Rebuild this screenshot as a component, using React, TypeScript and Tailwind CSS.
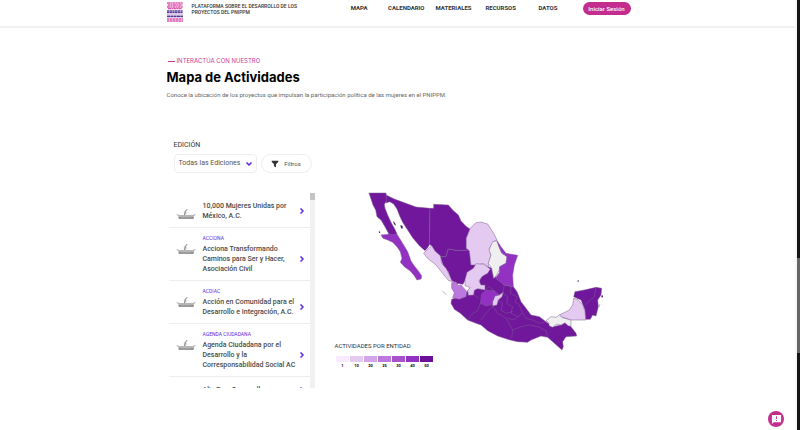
import { ChevronDown, ChevronRight } from "lucide-react";
import { useState } from "react";

const navItems = ["MAPA", "CALENDARIO", "MATERIALES", "RECURSOS", "DATOS"];

const projects = [
  { tag: "", name: "10,000 Mujeres Unidas por México, A.C." },
  { tag: "ACCIONA", name: "Acciona Transformando Caminos para Ser y Hacer, Asociación Civil" },
  { tag: "ACDIAC", name: "Acción en Comunidad para el Desarrollo e Integración, A.C." },
  { tag: "AGENDA CIUDADANA", name: "Agenda Ciudadana por el Desarrollo y la Corresponsabilidad Social AC" },
  { tag: "", name: "Alia Para Desarrollo" }
];

const legend = [
  { label: "1", color: "bg-[#f7ebfd]" },
  { label: "10", color: "bg-[#e4c9f1]" },
  { label: "20", color: "bg-[#d3a5ea]" },
  { label: "25", color: "bg-[#bd78dd]" },
  { label: "30", color: "bg-[#a851cd]" },
  { label: "40", color: "bg-[#9331c2]" },
  { label: "50", color: "bg-[#6b1199]" }
];

const states = [
  { name: "Baja California", fill: "#70179b", d: "M24 24H75L77 48L70 58L72 70L80 90L90 112L100 130L106 142L108 150L85 150L80 140L72 125L60 105L48 95L44 75L36 60L30 42Z" },
  { name: "Baja California Sur", fill: "#9331c2", d: "M60 150L85 148L108 148L122 170L140 200L150 228L158 240L172 258L182 272L180 282L168 285L160 272L148 258L130 245L118 232L123 220L118 200L108 185L95 172L80 165L66 160Z" },
  { name: "Sonora", fill: "#70179b", d: "M75 30L100 42L165 66L207 70L205 180L200 188L192 197L175 182L155 158L138 132L125 112L117 95L108 72L98 57L86 50L76 54Z" },
  { name: "Chihuahua", fill: "#70179b", d: "M207 70L218 70V58L262 60L275 75L292 90L300 108L315 124L327 132L316 160V190L325 195L290 197L262 192L255 215H238L222 200L212 182L205 178Z" },
  { name: "Durango", fill: "#70179b", d: "M238 215H255L262 192L290 197L325 195L328 215L330 240L345 238L340 255L322 262L314 282L306 298L285 295L270 285L262 260L248 245Z" },
  { name: "Sur", fill: "#70179b", d: "M382 245L392 250L398 280L405 275L430 300L457 305L468 320L480 350L495 370L510 390L535 395L555 410L575 425L600 420L612 413L630 425L645 445L647 453L615 455L605 470L607 485L603 495L575 470L560 457L540 453L510 465L500 472L470 470L440 463L410 453L380 437L360 420L345 415L320 405L298 385L280 373L270 355L272 343L295 335L318 320L340 300L355 290L360 275L372 263Z" },
  { name: "Coahuila", fill: "#e4c9f1", d: "M327 132L335 122L345 113L360 111L380 117L398 145L408 165L398 170L385 190L390 210L382 235V246L368 236L345 240L330 240L325 197L316 190V160Z" },
  { name: "Sinaloa", fill: "#e4c9f1", d: "M188 205L205 188L212 182L222 198L238 212L242 235L255 250L265 270L274 290L262 286L245 265L225 240L200 220Z" },
  { name: "Zacatecas", fill: "#e4c9f1", d: "M312 285L318 262L337 250L345 236L368 238L388 252L380 265L364 274L354 287L360 300L372 300V315L350 311L340 316L338 330L322 331L320 316L328 308L312 302Z" },
  { name: "Nayarit", fill: "#bd78dd", d: "M272 293L285 290L292 302L300 300L318 320L315 335L295 343L275 338L280 323L272 310Z" },
  { name: "Nuevo León", fill: "#efeff0", d: "M408 167L395 170L384 195L390 210L382 235L392 250L398 280L405 273L415 255L416 245L435 235L438 215L422 205L412 180Z" },
  { name: "Tamaulipas", fill: "#9331c2", d: "M408 167L420 185L435 205L470 211L460 240L455 270L457 305L430 300L403 280L415 263L416 245L435 235L438 215L422 203L412 180Z" },
  { name: "Guanajuato", fill: "#9331c2", d: "M362 327L375 315L400 317L415 330L397 340L392 360L375 363L358 355Z" },
  { name: "Querétaro", fill: "#e4c9f1", d: "M395 350L402 333L415 330L427 321L423 335L412 345L408 360L395 363Z" },
  { name: "Península", fill: "#70179b", d: "M638 335L642 320L670 315L705 307L722 310L720 330L710 345L712 365L705 393L695 390L688 403H673L672 375L660 345Z" },
  { name: "Campeche", fill: "#e4c9f1", d: "M638 340L650 343L665 360L672 380L674 405H630L600 395L595 390L625 375L635 360Z" },
  { name: "Tabasco", fill: "#efeff0", d: "M555 407L570 395L585 397L595 390L604 398L630 405V423H622L612 413L600 420L588 417L575 427L565 423L563 413Z" }
];

const innerBorders =
  "M320 405L335 385L350 378L358 355M395 363L375 385L360 405M395 363L410 385L435 400L455 435L452 460M455 435L480 425L505 420L530 425L555 437L560 457M430 300L425 325L440 335L437 355L455 365L450 385L470 395L485 385L475 360L462 350L468 335L448 325L450 305M410 345L425 355L420 375L435 385L455 380M485 385L495 400L515 405L535 415L555 410M705 307L700 335L672 360M338 330L355 340M372 315L385 305L400 317M470 395L460 405L440 400";

const islands =
  "M96 108L102 114L105 122L99 118ZM118 120L125 123V131L120 130ZM53 138L57 140L58 145L54 143ZM650 286H653V290H650ZM721 332L725 330L726 336L722 338Z";

function MexicoMap() {
  return (
    <svg viewBox="0 0 750 525" className="block w-full" role="img" aria-label="Mapa de actividades por entidad">
      <g stroke="#7f5c92" strokeWidth="1.5" strokeLinejoin="round">
        {states.map((state) => (
          <path key={state.name} d={state.d} fill={state.fill} />
        ))}
        <path d={innerBorders} fill="none" />
      </g>
      <path d={islands} fill="#4b1b63" />
      <path d="M244 318L256 329M717 357L714 366" stroke="#999" strokeWidth="2" />
    </svg>
  );
}

function Logo() {
  return (
    <svg viewBox="0 0 48 60" className="h-5 w-4 shrink-0" aria-hidden="true">
      <path d="M0 3H48M2 9H46M0 15H48M3 20H44" stroke="#dc55ae" strokeWidth="4" strokeDasharray="9 1 5 1" />
      <path d="M0 27H48M0 32H48" stroke="#5b3c9c" strokeWidth="4" strokeDasharray="7 1" />
      <path d="M0 37H48" stroke="#c39ad3" strokeWidth="2" />
      <path d="M0 43H48" stroke="#54349a" strokeWidth="5" strokeDasharray="9 1" />
      <path d="M0 51H48M0 57H48" stroke="#dc55ae" strokeWidth="4" strokeDasharray="8 1" />
    </svg>
  );
}

function Boat() {
  return (
    <svg viewBox="0 0 60 30" className="h-[10px] w-5 shrink-0" aria-hidden="true">
      <path d="M0 14L10 18H50L60 14L52 25Q30 30 9 25Z" fill="#b5b5b5" />
      <path d="M8 24Q30 28 53 24V29H8Z" fill="#777" />
      <path d="M26 18L28 7L33 1" fill="none" stroke="#666" strokeWidth="3" />
      <path d="M28 8L23 11M29 10L34 13" fill="none" stroke="#aaa" strokeWidth="2" />
    </svg>
  );
}

export default function App() {
  const [edition, setEdition] = useState("todas");

  return (
    <div className="flex min-h-screen bg-white font-['Roboto',sans-serif] text-[#333]">
      <div className="min-w-0 flex-1 border-r-2 border-[#f7f7f7]">
        <header className="border-b-2 border-[#f2f2f2]">
          <div className="mx-auto flex h-[26px] max-w-[466px] items-start pl-[2px]">
            <div className="flex flex-1 items-start gap-[9px] pt-[2px]">
              <Logo />
              <p className="w-[120px] pt-px text-[5px] leading-[6px] font-medium">PLATAFORMA SOBRE EL DESARROLLO DE LOS PROYECTOS DEL PNIPPM</p>
            </div>
            <nav className="grid w-[236px] grid-cols-5 pt-1 text-center text-[6px] leading-[8px] font-bold">
              {navItems.map((item) => (
                <a key={item} href="#">
                  {item}
                </a>
              ))}
            </nav>
            <button type="button" className="mt-[2px] ml-[11px] h-[13px] w-12 rounded-full bg-[#c22d8e] text-[6px] leading-none font-medium text-white">
              Iniciar Sesión
            </button>
          </div>
        </header>

        <main className="mx-auto max-w-[466px] pt-7 pl-[2px]">
          <p className="flex items-center gap-[2px] pl-px font-['Inter',sans-serif] text-[6px] leading-[10px] text-[#cb3a97]">
            <span className="h-px w-[7px] bg-[#cb3a97]" />
            INTERACTÚA CON NUESTRO
          </p>
          <h1 className="mt-px font-['Inter',sans-serif] text-[13px] leading-5 font-bold text-black">Mapa de Actividades</h1>
          <p className="mt-[3px] text-[6px] leading-[10px] text-[#666]">
            Conoce la ubicación de los proyectos que impulsan la participación política de las mujeres en el PNIPPM.
          </p>

          <div className="mt-10 pl-[7px]">
            <label htmlFor="edicion" className="block text-[7px] leading-[10px]">
              EDICIÓN
            </label>
            <div className="mt-1 flex items-center gap-1">
              <div className="relative">
                <select
                  id="edicion"
                  value={edition}
                  onChange={(event) => setEdition(event.target.value)}
                  className="block h-[19px] w-[83px] appearance-none rounded border border-[#eee] bg-white pl-1 text-[7px] text-[#555]"
                >
                  <option value="todas">Todas las Ediciones</option>
                </select>
                <ChevronDown className="pointer-events-none absolute top-[6px] right-1 h-2 w-2 text-[#5b2be0]" strokeWidth={5} />
              </div>
              <button type="button" className="flex h-[19px] w-[51px] items-center justify-center gap-[5px] rounded-full border border-[#eee] text-[6px] leading-[8px] text-[#555]">
                <svg viewBox="0 0 24 24" className="h-2 w-2" aria-hidden="true">
                  <path d="M2 2H22V5L15 13V22L9 19V13L2 5Z" fill="#333" />
                </svg>
                Filtros
              </button>
            </div>
          </div>

          <div className="mt-5 flex items-start">
            <div className="flex h-[195px] w-[148px] shrink-0 pl-[2px]">
              <ul className="min-w-0 flex-1 overflow-y-auto [scrollbar-width:none]">
                {projects.map((project) => (
                  <li key={project.name} className="border-b border-[#eee]">
                    <a href="#" className="flex items-start gap-[7px] pt-[5px] pr-1 pb-[6px] pl-[7px]">
                      <span className="pt-[11px]">
                        <Boat />
                      </span>
                      <span className="min-w-0 flex-1">
                        {project.tag ? (
                          <span className="block text-[5px] leading-[11px] text-[#5b2be0]">{project.tag}</span>
                        ) : (
                          <span className="block h-[3px]" />
                        )}
                        <span className="flex items-center">
                          <span className="min-w-0 flex-1 text-[7px] leading-[10px] font-medium text-[#4a4a4a]">{project.name}</span>
                          <ChevronRight className="h-2 w-2 shrink-0 text-[#5b2be0]" strokeWidth={5} />
                        </span>
                      </span>
                    </a>
                  </li>
                ))}
              </ul>
              <div className="w-[5px] bg-[#f1f1f1]">
                <div className="h-[7px] bg-[#c4c4c4]" />
              </div>
            </div>

            <section className="ml-5 flex-1">
              <div className="-mt-2 ml-[26px] w-[250px]">
                <MexicoMap />
              </div>
              <h2 className="-mt-[18px] text-[6px] leading-[8px]">ACTIVIDADES POR ENTIDAD</h2>
              <ul className="mt-[6px] flex pl-px">
                {legend.map((step) => (
                  <li key={step.label} className="w-[14px] text-center text-[4px] leading-[8px] font-bold text-black">
                    <span className={`mr-px block h-[6px] ${step.color}`} />
                    {step.label}
                  </li>
                ))}
              </ul>
            </section>
          </div>
        </main>

        <button type="button" aria-label="Enviar comentarios" className="fixed right-4 bottom-[3px] grid h-4 w-4 place-items-center rounded-full bg-[#c22d8e]">
          <svg viewBox="0 0 24 24" className="h-[11px] w-[11px]" aria-hidden="true">
            <path d="M2 2H22V18H6L2 22Z" fill="white" />
            <path d="M12 5V11M12 13V15" stroke="#c22d8e" strokeWidth="2" />
          </svg>
        </button>
      </div>
      <div className="flex w-[3px] flex-col bg-[#151515]">
        <div className="h-[60%]" />
        <div className="h-[22%] bg-[#666]" />
      </div>
    </div>
  );
}
